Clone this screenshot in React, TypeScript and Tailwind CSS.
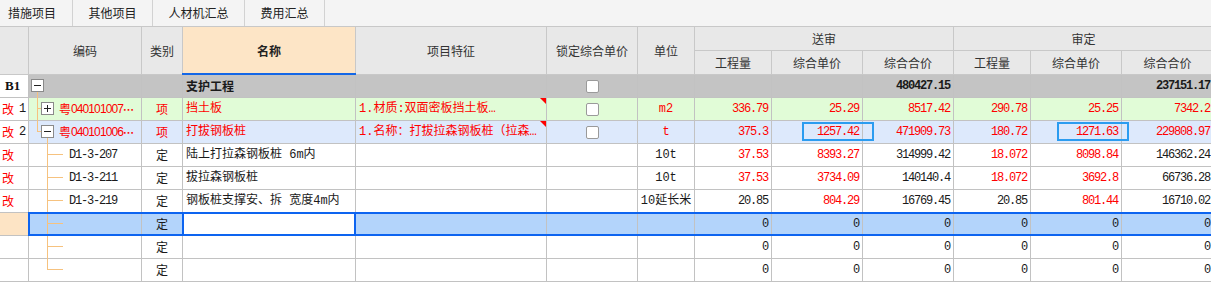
import React from "react";

const cw = [
  "w-[29px]",
  "w-[113px]",
  "w-[41px]",
  "w-[173px]",
  "w-[191px]",
  "w-[91px]",
  "w-[57px]",
  "w-[77px]",
  "w-[91px]",
  "w-[91px]",
  "w-[77px]",
  "w-[91px]",
  "w-[92px]",
];

const cjk = "font-['Noto_Sans_CJK_SC',sans-serif]";
const mono = "font-['Liberation_Mono','Noto_Sans_CJK_SC',monospace] text-[12px] tracking-[-1.2px]";
const mixed = "font-['Liberation_Mono','Noto_Sans_CJK_SC',monospace] text-[12px]";
const RED = "text-[#ff0000]";
const BLK = "text-[#1a1a1a]";
const LINE = "bg-[#f6c27f]";
const cell = "shrink-0 h-full border-r border-[#c2c2c2] flex items-center relative";
const hcell = "shrink-0 h-full border-r border-[#c8c8c8] flex items-center justify-center relative";

type Tree = "b1" | "r1" | "r2" | "child" | "last";

type R = {
  bg: string;
  c0: React.ReactNode;
  c0bg?: string;
  tree: Tree;
  code?: React.ReactNode;
  type?: string;
  typeRed?: boolean;
  name?: string;
  nameRed?: boolean;
  nameBold?: boolean;
  feat?: string;
  check?: boolean;
  unit?: string;
  unitRed?: boolean;
  nums: [string, boolean][];
  bold?: boolean;
  sel?: boolean;
  boxed?: boolean;
};

function Box({ plus, pos }: { plus?: boolean; pos: string }) {
  return (
    <div className={`absolute ${pos} w-[13px] h-[13px] border border-[#8a8a8a] bg-white`}>
      <div className="absolute left-[2px] top-[5px] w-[7px] h-px bg-[#222]" />
      {plus && <div className="absolute left-[5px] top-[2px] w-px h-[7px] bg-[#222]" />}
    </div>
  );
}

function TreeLines({ t }: { t: Tree }) {
  if (t === "b1")
    return (
      <>
        <Box pos="left-[2px] top-[4px]" />
        <div className={`absolute left-[8px] top-[17px] w-px h-[6px] ${LINE}`} />
      </>
    );
  if (t === "r1")
    return (
      <>
        <div className={`absolute left-[8px] top-0 w-px h-[23px] ${LINE}`} />
        <div className={`absolute left-[8px] top-[10px] w-[4px] h-px ${LINE}`} />
        <Box plus pos="left-[12px] top-[4px]" />
      </>
    );
  if (t === "r2")
    return (
      <>
        <div className={`absolute left-[8px] top-0 w-px h-[11px] ${LINE}`} />
        <div className={`absolute left-[8px] top-[10px] w-[4px] h-px ${LINE}`} />
        <Box pos="left-[12px] top-[4px]" />
        <div className={`absolute left-[18px] top-[17px] w-px h-[6px] ${LINE}`} />
      </>
    );
  if (t === "child")
    return (
      <>
        <div className={`absolute left-[18px] top-0 w-px h-[23px] ${LINE}`} />
        <div className={`absolute left-[18px] top-[10px] w-[16px] h-px ${LINE}`} />
      </>
    );
  return (
    <>
      <div className={`absolute left-[18px] top-0 w-px h-[11px] ${LINE}`} />
      <div className={`absolute left-[18px] top-[10px] w-[16px] h-px ${LINE}`} />
    </>
  );
}

function Check() {
  return <div className="w-[13px] h-[13px] rounded-[2px] border border-[#9a9a9a] bg-white" />;
}

function Gai({ n }: { n?: string }) {
  return (
    <>
      <span className={`${cjk} text-[12px] ${RED} pl-[2px]`}>改</span>
      {n && <span className={`${mono} ${BLK} ml-[5px]`}>{n}</span>}
    </>
  );
}

function Code({ s }: { s: string }) {
  return (
    <span className={`pl-[30px] whitespace-nowrap ${RED} flex items-center`}>
      <span className={`${cjk} text-[12px]`}>粤</span>
      <span className="font-['Liberation_Sans',sans-serif] text-[12px] tracking-[-0.9px]">{s}</span>
      <span className={`${cjk} text-[11px] font-bold`}>…</span>
    </span>
  );
}

const zeros: [string, boolean][] = [
  ["0", false],
  ["0", false],
  ["0", false],
  ["0", false],
  ["0", false],
  ["0", false],
];

const rows: R[] = [
  {
    bg: "bg-[#c4c4c4]",
    c0: (
      <span className="font-['Liberation_Serif',serif] text-[13px] font-bold pl-[5px] text-[#111]">B1</span>
    ),
    tree: "b1",
    name: "支护工程",
    nameBold: true,
    check: true,
    nums: [
      ["", false],
      ["", false],
      ["480427.15", false],
      ["", false],
      ["", false],
      ["237151.17", false],
    ],
    bold: true,
  },
  {
    bg: "bg-[#e1fcd7]",
    c0: <Gai n="1" />,
    tree: "r1",
    code: <Code s="040101007" />,
    type: "项",
    typeRed: true,
    name: "挡土板",
    nameRed: true,
    feat: "1.材质:双面密板挡土板…",
    check: true,
    unit: "m2",
    unitRed: true,
    nums: [
      ["336.79", true],
      ["25.29", true],
      ["8517.42", true],
      ["290.78", true],
      ["25.25", true],
      ["7342.2", true],
    ],
  },
  {
    bg: "bg-[#dde9fc]",
    c0: <Gai n="2" />,
    tree: "r2",
    code: <Code s="040101006" />,
    type: "项",
    typeRed: true,
    name: "打拔钢板桩",
    nameRed: true,
    feat: "1.名称：打拔拉森钢板桩（拉森…",
    check: true,
    unit: "t",
    unitRed: true,
    boxed: true,
    nums: [
      ["375.3", true],
      ["1257.42", true],
      ["471909.73", true],
      ["180.72", true],
      ["1271.63", true],
      ["229808.97", true],
    ],
  },
  {
    bg: "bg-white",
    c0: <Gai />,
    tree: "child",
    code: <span className={`pl-[40px] ${mono} ${BLK}`}>D1-3-207</span>,
    type: "定",
    name: "陆上打拉森钢板桩 6m内",
    unit: "10t",
    nums: [
      ["37.53", true],
      ["8393.27", true],
      ["314999.42", false],
      ["18.072", true],
      ["8098.84", true],
      ["146362.24", false],
    ],
  },
  {
    bg: "bg-white",
    c0: <Gai />,
    tree: "child",
    code: <span className={`pl-[40px] ${mono} ${BLK}`}>D1-3-211</span>,
    type: "定",
    name: "拔拉森钢板桩",
    unit: "10t",
    nums: [
      ["37.53", true],
      ["3734.09", true],
      ["140140.4", false],
      ["18.072", true],
      ["3692.8", true],
      ["66736.28", false],
    ],
  },
  {
    bg: "bg-white",
    c0: <Gai />,
    tree: "child",
    code: <span className={`pl-[40px] ${mono} ${BLK}`}>D1-3-219</span>,
    type: "定",
    name: "钢板桩支撑安、拆 宽度4m内",
    unit: "10延长米",
    nums: [
      ["20.85", false],
      ["804.29", true],
      ["16769.45", false],
      ["20.85", false],
      ["801.44", true],
      ["16710.02", false],
    ],
  },
  {
    bg: "bg-[#b3d4fb]",
    c0bg: "bg-[#fde4c5]",
    c0: null,
    tree: "child",
    type: "定",
    sel: true,
    nums: zeros,
  },
  { bg: "bg-white", c0: null, tree: "child", type: "定", nums: zeros },
  { bg: "bg-white", c0: null, tree: "last", type: "定", nums: zeros },
];

function Row({ r }: { r: R }) {
  return (
    <div className={`relative flex h-[23px] border-b border-[#c2c2c2] ${r.bg}`}>
      <div className={`${cw[0]} ${cell} ${r.c0bg ?? "bg-white"}`}>{r.c0}</div>
      <div className={`${cw[1]} ${cell}`}>
        <TreeLines t={r.tree} />
        {r.code}
      </div>
      <div className={`${cw[2]} ${cell} justify-center ${cjk} text-[12px] ${r.typeRed ? RED : BLK}`}>{r.type}</div>
      <div
        className={`${cw[3]} ${cell} pl-[3px] whitespace-nowrap ${r.sel ? "bg-white" : ""} ${
          r.nameBold ? `${cjk} font-bold text-[12px]` : mixed
        } ${r.nameRed ? RED : BLK}`}
      >
        {r.name}
        {r.sel && (
          <div className="absolute left-[-1px] top-[-1px] w-[174px] h-[24px] border-2 border-[#0d64f0]" />
        )}
      </div>
      <div className={`${cw[4]} ${cell} pl-[3px] whitespace-nowrap ${mixed} ${RED}`}>
        {r.feat}
        {r.feat && (
          <div className="absolute top-0 right-0 w-0 h-0 border-l-[6px] border-l-transparent border-t-[6px] border-t-[#ff0000]" />
        )}
      </div>
      <div className={`${cw[5]} ${cell} justify-center`}>{r.check && <Check />}</div>
      <div className={`${cw[6]} ${cell} justify-center whitespace-nowrap ${mixed} ${r.unitRed ? RED : BLK}`}>
        {r.unit}
      </div>
      {r.nums.map(([v, red], i) => (
        <div
          key={i}
          className={`${cw[7 + i]} ${cell} justify-end pr-[3px] ${mono} ${red ? RED : BLK} ${
            r.bold ? "font-bold" : ""
          }`}
        >
          {v}
          {r.boxed && i === 1 && (
            <div className="absolute left-[30px] top-[1px] w-[72px] h-[19px] border-2 border-[#2b9cf0]" />
          )}
          {r.boxed && i === 4 && (
            <div className="absolute left-[26px] top-[1px] w-[72px] h-[19px] border-2 border-[#2b9cf0]" />
          )}
        </div>
      ))}
      {r.sel && (
        <div className="absolute left-[28px] top-[-1px] right-[-4px] h-[24px] border-2 border-[#0d64f0]" />
      )}
    </div>
  );
}

function Sub({ w, children }: { w: string; children: React.ReactNode }) {
  return <div className={`${w} ${hcell}`}>{children}</div>;
}

export default function App() {
  return (
    <div className={`w-[1211px] h-[289px] overflow-hidden bg-white ${cjk} text-[12px]`}>
      {/* tabs */}
      <div className="h-[27px] flex bg-[#f4f4f4] border-b border-[#c8c8c8] text-[#222]">
        <div className="w-[73px] h-full flex items-center pl-[8px] border-r border-[#d2d2d2]">措施项目</div>
        <div className="w-[80px] h-full flex items-center justify-center border-r border-[#d2d2d2]">其他项目</div>
        <div className="w-[92px] h-full flex items-center justify-center border-r border-[#d2d2d2]">人材机汇总</div>
        <div className="w-[80px] h-full flex items-center justify-center border-r border-[#d2d2d2]">费用汇总</div>
      </div>
      {/* header */}
      <div className="h-[48px] flex bg-[#e8e8e8] border-b border-[#c8c8c8] text-[#333] w-[1213px]">
        <div className={`${cw[0]} ${hcell}`} />
        <div className={`${cw[1]} ${hcell}`}>编码</div>
        <div className={`${cw[2]} ${hcell}`}>类别</div>
        <div className={`${cw[3]} ${hcell} bg-[#fde5c6] font-bold text-[#222]`}>
          名称
          <div className="absolute left-[-1px] right-[-1px] bottom-[-1px] h-[2px] bg-[#1467e6]" />
        </div>
        <div className={`${cw[4]} ${hcell}`}>项目特征</div>
        <div className={`${cw[5]} ${hcell}`}>锁定综合单价</div>
        <div className={`${cw[6]} ${hcell}`}>单位</div>
        <div className="w-[259px] shrink-0 h-full flex flex-col">
          <div className="h-[24px] border-b border-r border-[#c8c8c8] flex items-center justify-center">送审</div>
          <div className="flex-1 flex">
            <Sub w={cw[7]}>工程量</Sub>
            <Sub w={cw[8]}>综合单价</Sub>
            <Sub w={cw[9]}>综合合价</Sub>
          </div>
        </div>
        <div className="w-[260px] shrink-0 h-full flex flex-col">
          <div className="h-[24px] border-b border-r border-[#c8c8c8] flex items-center justify-center">审定</div>
          <div className="flex-1 flex">
            <Sub w={cw[10]}>工程量</Sub>
            <Sub w={cw[11]}>综合单价</Sub>
            <Sub w={cw[12]}>综合合价</Sub>
          </div>
        </div>
      </div>
      {/* body */}
      <div className="w-[1213px]">
        {rows.map((r, i) => (
          <Row key={i} r={r} />
        ))}
      </div>
    </div>
  );
}
